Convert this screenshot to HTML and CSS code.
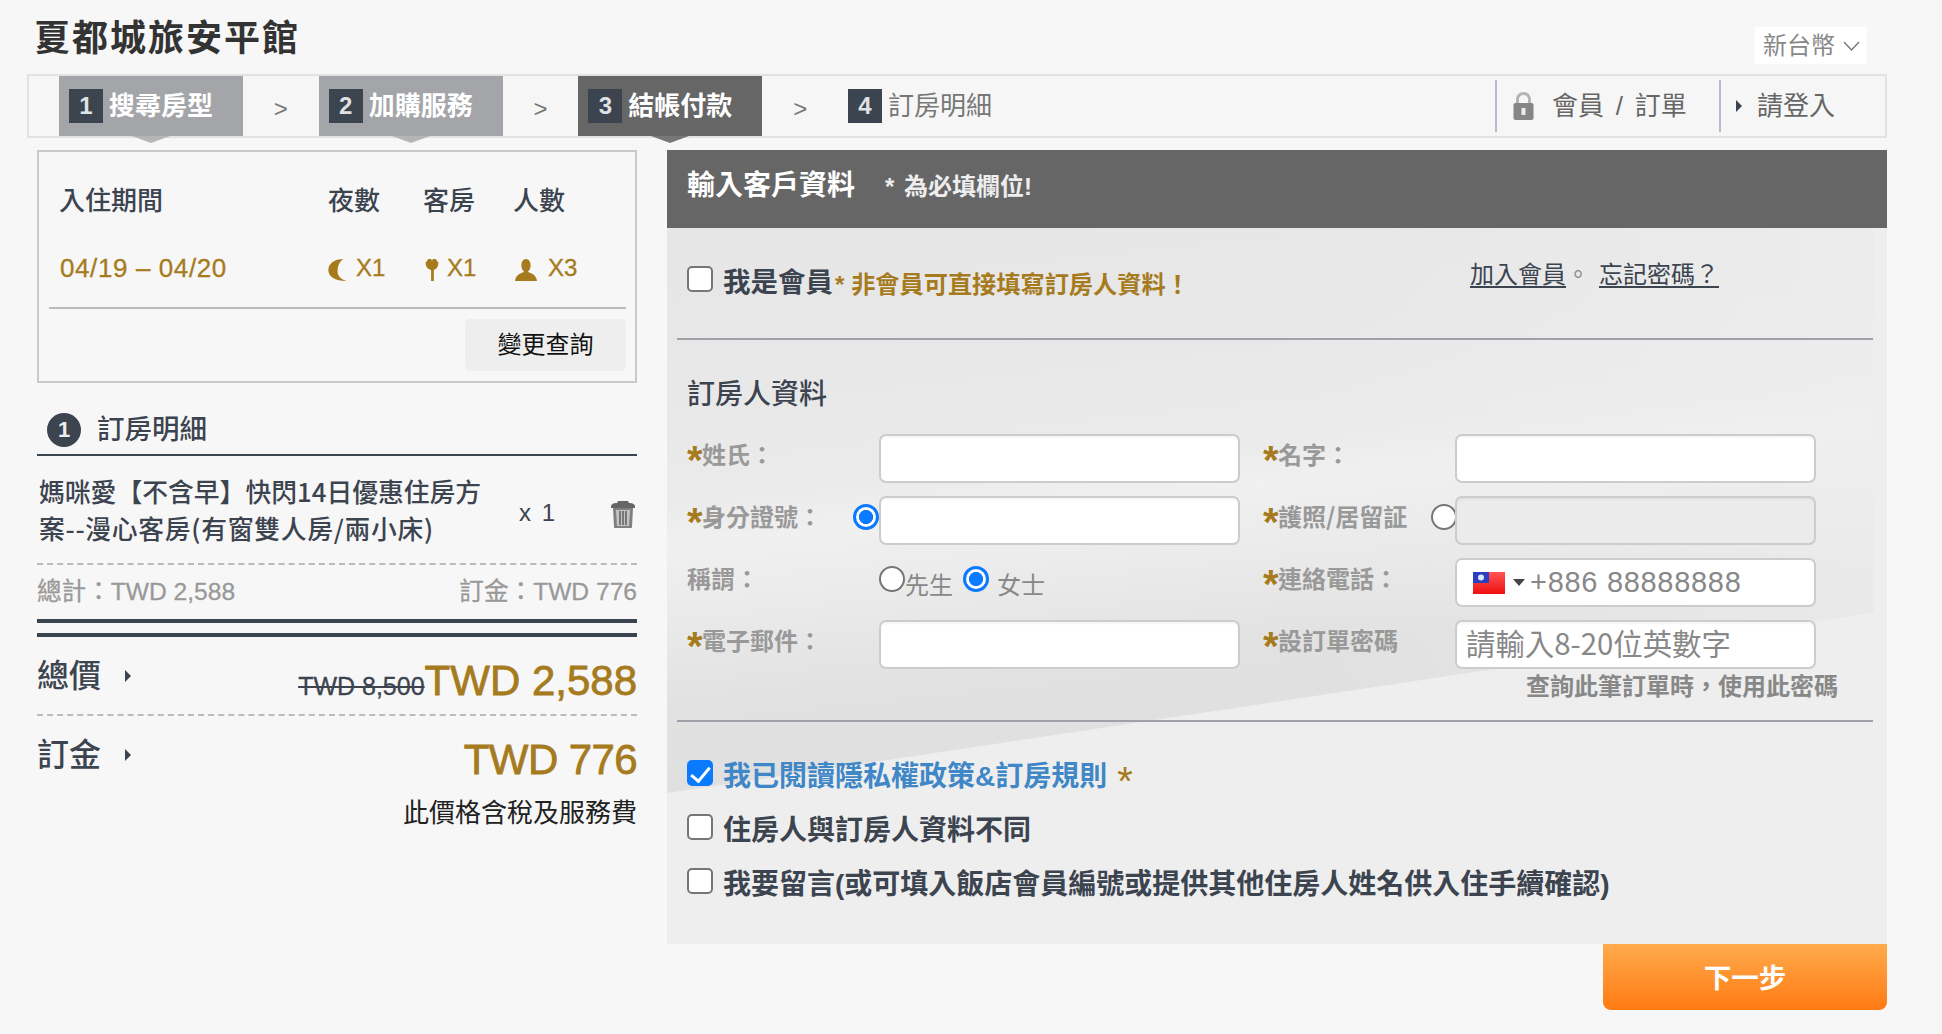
FILE: index.html
```html
<!DOCTYPE html>
<html lang="zh-Hant">
<head>
<meta charset="utf-8">
<title>夏都城旅安平館</title>
<link rel="stylesheet" href="styles.css">
</head>
<body>
<header class="top">
  <h1 class="hotel">夏都城旅安平館</h1>
  <div class="currency">新台幣
    <svg class="chev" viewBox="0 0 17 10"><path d="M1 1l7.5 8L16 1" fill="none" stroke="#777" stroke-width="1.4"/></svg>
  </div>
</header>

<nav class="steps">
  <div class="step done"><span class="num">1</span>搜尋房型</div>
  <div class="sep">&gt;</div>
  <div class="step done"><span class="num">2</span>加購服務</div>
  <div class="sep">&gt;</div>
  <div class="step now"><span class="num">3</span>結帳付款</div>
  <div class="sep">&gt;</div>
  <div class="step next"><span class="num">4</span>訂房明細</div>
  <div class="account">
    <div class="acct-item member">
      <svg class="lock" viewBox="0 0 20 28"><path d="M4 13V7a6 5.5 0 0 1 12 0v6" fill="none" stroke="#b4b4b4" stroke-width="3"/><rect y="11" width="20" height="17" rx="2" fill="#868686"/><rect x="8" y="16" width="4" height="7" fill="#ececec"/></svg>
      <span class="acct-text">會員 / 訂單</span>
    </div>
    <div class="acct-item login"><i class="tri dark"></i><span>請登入</span></div>
  </div>
</nav>

<main class="main">
  <aside class="side">
    <section class="stay">
      <div class="stay-row stay-head">
        <span class="c-date">入住期間</span><span class="c-n">夜數</span><span class="c-r">客房</span><span class="c-p">人數</span>
      </div>
      <div class="stay-row stay-val">
        <span class="c-date date-text">04/19 – 04/20</span>
        <span class="c-n"><svg class="ic moon" viewBox="0 0 20 24"><path d="M16 0C7 0 0 5 0 12c0 7 7 12 20 12-6-2-10-5-10-11 0-5 2-10 6-13z" fill="#a67b1e"/></svg>X1</span>
        <span class="c-r"><svg class="ic key" viewBox="0 0 14 24"><path d="M3 0h3l1 2 1-2h3l3 4c0 4-2 7-5 8v12H6V12C2 11 0 8 0 4z" fill="#a67b1e"/></svg>X1</span>
        <span class="c-p"><svg class="ic person" viewBox="0 0 24 24"><path d="M12 0c3 0 5 3 5 7 0 3-1 5-3 7 4 2 9 3 10 10H0c1-7 6-8 10-10-2-2-3-4-3-7 0-4 2-7 5-7z" fill="#a67b1e"/></svg>X3</span>
      </div>
      <div class="stay-line"></div>
      <div class="stay-act"><button class="change" type="button">變更查詢</button></div>
    </section>

    <h2 class="detail-title"><span class="circle">1</span>訂房明細</h2>
    <div class="item">
      <p class="item-name"><span class="ln">媽咪愛【不含早】快閃14日優惠住房方</span><span class="ln wide">案--漫心客房(有窗雙人房/兩小床)</span></p>
      <span class="qty">x 1</span>
      <svg class="trash" viewBox="0 0 26 28"><path d="M1 7c0-3 2-4 6-4l1-2h10l1 2c4 0 6 1 6 4v1H1z" fill="#666"/><path d="M3 8h20l-1 19c0 .6-.5 1-1 1H5c-.5 0-1-.4-1-1z" fill="#808080"/><path d="M6 10h14l-1 16H7z" fill="#c4c4c4"/><path d="M9 11h2v14H9zM12 11h2v14h-2zM15 11h2v14h-2z" fill="#777"/></svg>
    </div>
    <div class="subtotal"><span>總計：TWD 2,588</span><span>訂金：TWD 776</span></div>
    <div class="double"></div>
    <div class="price-row total">
      <span class="price-label">總價<i class="tri dark"></i></span>
      <span class="price-val"><s class="old">TWD 8,500</s><b class="big">TWD 2,588</b></span>
    </div>
    <div class="price-row">
      <span class="price-label">訂金<i class="tri dark"></i></span>
      <span class="price-val"><b class="big tight">TWD 776</b></span>
    </div>
    <p class="tax">此價格含稅及服務費</p>
  </aside>

  <div class="content">
    <section class="panel">
      <div class="panel-head"><h2 class="panel-title">輸入客戶資料</h2><span class="panel-note">* 為必填欄位!</span></div>
      <div class="panel-body">
        <div class="member-row">
          <input class="cb" type="checkbox">
          <span class="check-label">我是會員</span><span class="member-note">* 非會員可直接填寫訂房人資料！</span>
          <span class="links"><a class="lnk" href="#">加入會員</a><span class="dot">。</span><a class="lnk" href="#">忘記密碼？</a></span>
        </div>
        <h3 class="form-title">訂房人資料</h3>
        <div class="form-grid">
          <div class="field"><label class="lab"><em>*</em>姓氏：</label><input class="inp" type="text"></div>
          <div class="field"><label class="lab"><em>*</em>名字：</label><input class="inp" type="text"></div>
          <div class="field"><label class="lab"><em>*</em>身分證號：</label><input class="rd side-rd" type="radio" name="idt" checked><input class="inp" type="text"></div>
          <div class="field"><label class="lab"><em>*</em>護照/居留証</label><input class="rd side-rd rd-clip" type="radio" name="idt"><input class="inp off" type="text" disabled></div>
          <div class="field"><label class="lab">稱謂：</label>
            <div class="title-opts"><input class="rd" type="radio" name="ttl"><span class="opt">先生</span><input class="rd rd2" type="radio" name="ttl" checked><span class="opt opt2">女士</span></div>
          </div>
          <div class="field"><label class="lab"><em>*</em>連絡電話：</label>
            <div class="phone">
              <svg class="flag" viewBox="0 0 32 22"><defs><linearGradient id="fr" x1="0" y1="0" x2="0" y2="1"><stop offset="0" stop-color="#f55"/><stop offset="1" stop-color="#ee1010"/></linearGradient></defs><rect width="32" height="22" fill="url(#fr)"/><rect width="16" height="11" fill="#2a3fc0"/><circle cx="8" cy="5.5" r="3" fill="#dfe6ff"/></svg>
              <i class="caret"></i><span class="tel">+886 88888888</span>
            </div>
          </div>
          <div class="field"><label class="lab"><em>*</em>電子郵件：</label><input class="inp" type="text"></div>
          <div class="field"><label class="lab"><em>*</em>設訂單密碼</label><input class="inp pw" type="text" placeholder="請輸入8-20位英數字"></div>
          <p class="hint">查詢此筆訂單時，使用此密碼</p>
        </div>
        <div class="checks">
          <div class="check-row"><input class="cb" type="checkbox" checked><span class="check-label agree">我已閱讀隱私權政策&amp;訂房規則</span><em class="star">*</em></div>
          <div class="check-row"><input class="cb" type="checkbox"><span class="check-label">住房人與訂房人資料不同</span></div>
          <div class="check-row"><input class="cb" type="checkbox"><span class="check-label">我要留言(或可填入飯店會員編號或提供其他住房人姓名供入住手續確認)</span></div>
        </div>
      </div>
    </section>
    <div class="actions"><button class="next-btn" type="button">下一步</button></div>
  </div>
</main>
</body>
</html>
```
FILE: styles.css
```css
* { box-sizing: border-box; }
html, body { margin: 0; padding: 0; }
body {
  background: #f7f7f7;
  color: #3c4450;
  font-family: "Liberation Sans", "Noto Sans CJK TC", sans-serif;
  font-size: 24px;
  width: 1942px;
  min-height: 1034px;
  overflow: hidden;
}
h1, h2, h3, p { margin: 0; font-weight: normal; }
em { font-style: normal; }

/* header */
.top { display: flex; justify-content: space-between; align-items: flex-start; height: 74px; padding: 0 75px 0 34px; }
.hotel { font-size: 36px; font-weight: 700; line-height: 44px; margin-top: 17px; letter-spacing: 2px; color: #333; }
.currency { margin-top: 27px; width: 112px; height: 37px; background: #fff; color: #888; line-height: 37px; padding-left: 8px; display: flex; align-items: center; gap: 8px; }
.chev { width: 17px; height: 10px; }

/* steps */
.steps { display: flex; align-items: flex-start; height: 64px; margin: 0 55px 0 27px; padding-left: 30px; border: 2px solid #e2e2e2; background: #f6f6f6; position: relative; }
.step { width: 184px; height: 60px; padding: 14px 0 0 10px; display: flex; align-items: flex-start; font-size: 26px; line-height: 32px; font-weight: 700; color: #fff; position: relative; flex: none; }
.step .num { width: 34px; height: 34px; margin: -1px 6px 0 0; background: #3c4450; color: #dfe1e4; text-align: center; font-size: 24px; line-height: 34px; font-weight: 700; flex: none; }
.done { background: #a4a5a8; }
.now { background: #666; }
.done::after, .now::after { content: ""; position: absolute; left: 73px; top: 60px; border-left: 19px solid transparent; border-right: 19px solid transparent; border-top: 7px solid #b5b5b8; }
.now::after { border-top-color: #777; }
.next { color: #777; font-weight: 400; }
.sep { width: 75.67px; flex: none; text-align: center; color: #777; font-size: 24px; line-height: 60px; padding-top: 3px; }
.account { margin-left: auto; display: flex; align-items: flex-start; padding-top: 4px; color: #666; font-size: 26px; }
.acct-item { height: 52px; border-left: 2px solid #b4bcc8; display: flex; align-items: center; line-height: 52px; }
.member { width: 224px; padding-left: 16px; }
.lock { width: 21px; height: 28px; margin-right: 18px; flex: none; }
.acct-text { word-spacing: 4.5px; }
.login { width: 166px; padding-left: 15px; }
.login .tri { margin-right: 15px; }
.tri { display: inline-block; width: 0; height: 0; border-left: 6px solid #555; border-top: 6px solid transparent; border-bottom: 6px solid transparent; flex: none; }
.tri.dark { border-left-color: #3c4450; }

/* layout */
.main { display: grid; grid-template-columns: 600px 1220px; column-gap: 30px; padding: 12px 55px 0 37px; }

/* stay box */
.stay { height: 233px; border: 2px solid #c9c9c9; padding: 0 9px 0 10px; }
.stay-row { display: grid; grid-template-columns: 269px 95px 90px 1fr; padding-left: 10px; }
.stay-head { margin-top: 33px; font-size: 26px; line-height: 32px; font-weight: 500; }
.stay-val { margin-top: 35px; font-size: 24px; line-height: 32px; color: #a67b1e; -webkit-text-stroke: .3px #a67b1e; }
.stay-val span { display: flex; align-items: center; }
.date-text { font-size: 26px; letter-spacing: .6px; padding-left: 1px; }
.ic { flex: none; height: 22px; margin-top: 4px; }
.moon { width: 19px; margin-right: 9px; }
.key { width: 14px; margin: 4px 8px 0 2px; }
.person { width: 24px; margin: 4px 10px 0 1px; }
.stay-line { height: 2px; margin-top: 23px; background: #bbb; }
.stay-act { display: flex; justify-content: flex-end; margin-top: 10px; }
.change { width: 161px; height: 52px; border: 0; border-radius: 5px; background: #eee; color: #111; font: inherit; line-height: 52px; padding: 0; }

/* order */
.detail-title { display: flex; align-items: flex-start; height: 43px; margin-top: 30px; padding-left: 10px; border-bottom: 2px solid #3c4450; font-size: 27.5px; line-height: 34px; font-weight: 500; }
.circle { width: 34px; height: 34px; border-radius: 50%; background: #3c4450; color: #eee; font-family: "Liberation Sans", sans-serif; font-size: 22px; font-weight: 700; text-align: center; line-height: 34px; margin-right: 16px; }
.item { position: relative; display: flex; align-items: flex-start; height: 109px; padding: 16px 0 0 2px; border-bottom: 2px dashed #bbb; }
.item-name { width: 455px; font-family: "Noto Sans CJK TC", sans-serif; font-size: 25.8px; line-height: 37px; font-weight: 500; flex: none; }
.ln { display: block; white-space: nowrap; }
.wide { letter-spacing: .7px; }
.qty { margin: 22px 0 0 25px; width: 90px; line-height: 38px; letter-spacing: 2px; }
.trash { width: 26px; height: 28px; margin: 28px 1px 0 auto; flex: none; }
.subtotal { display: flex; justify-content: space-between; margin-top: 11px; font-size: 24.6px; line-height: 32px; color: #999; -webkit-text-stroke: .3px #999; }
.double { height: 18px; margin-top: 11px; border-top: 4px solid #3c4450; border-bottom: 4px solid #3c4450; }
.price-row { display: flex; justify-content: space-between; align-items: flex-start; height: 79px; }
.total { border-bottom: 2px dashed #bbb; }
.price-label { display: flex; align-items: center; margin-top: 19px; font-size: 32px; line-height: 40px; font-weight: 500; }
.price-label .tri { margin-left: 24px; }
.price-val { display: flex; align-items: baseline; margin-top: 20px; line-height: 48px; }
.old { font-size: 25px; color: #3c4450; -webkit-text-stroke: .3px #3c4450; }
.big { font-size: 42px; font-weight: 400; color: #a67b1e; -webkit-text-stroke: .8px #a67b1e; }
.tight { letter-spacing: -.6px; }
.tax { margin-top: 2px; text-align: right; font-size: 26px; line-height: 32px; color: #222; }

/* panel */
.panel-head { display: flex; align-items: center; height: 78px; padding: 0 0 6px 20px; background: #666; color: #fff; }
.panel-title { font-size: 28px; font-weight: 700; line-height: 36px; }
.panel-note { margin-left: 30px; font-size: 24px; font-weight: 700; line-height: 36px; color: #eee; padding-top: 2px; word-spacing: 3px; }
.panel-body { position: relative; isolation: isolate; height: 716px; background: #eee; padding: 0 14px 0 20px; }
.panel-body::before { content: ""; position: absolute; z-index: -1; left: 0; top: 0; width: 1207px; height: 565px; clip-path: polygon(0 0, 100% 0, 100% 68%, 0 100%); background: linear-gradient(90deg, rgba(238,238,238,0) 55%, rgba(238,238,238,.65) 100%), linear-gradient(174deg, #e6e6e6 0%, #e8e8e8 25%, #ebebeb 40%, #f0f0f0 46%, #ebebeb 55%, #e1e1e1 70%, #dedede 100%); }
.member-row { display: flex; align-items: flex-start; height: 112px; margin-left: -10px; padding: 38px 0 0 10px; border-bottom: 2px solid #a0a0a8; }
.cb { appearance: none; -webkit-appearance: none; flex: none; position: relative; width: 26px; height: 26px; margin: 0 10px 0 0; background: #fff; border: 2px solid #767676; border-radius: 5px; }
.cb:checked { background: #0a7aff; border-color: #0a7aff; }
.cb:checked::after { content: ""; position: absolute; left: 6px; top: 1px; width: 8px; height: 16px; border: solid #fff; border-width: 0 3px 3px 0; transform: rotate(40deg); }
.check-label { font-size: 28px; font-weight: 700; line-height: 36px; }
.member-row .check-label { margin-top: -1px; font-size: 27.5px; }
.member-note { margin-left: 2px; margin-top: 1px; font-size: 24.2px; font-weight: 700; line-height: 36px; color: #a67b1e; white-space: pre; }
.links { margin-left: auto; margin-top: -9px; padding-right: 154px; display: flex; line-height: 36px; }
.lnk { color: #3c4450; text-decoration: underline; text-underline-offset: 3px; }
.dot { width: 33px; color: #888; }
.form-title { margin-top: 37px; font-size: 28px; font-weight: 500; line-height: 36px; }
.form-grid { display: grid; grid-template-columns: 553px 575px; column-gap: 23px; row-gap: 13px; margin-top: 21px; }
.field { display: flex; align-items: flex-start; height: 49px; position: relative; }
.lab { width: 192px; flex: none; font-family: "Noto Sans CJK TC", sans-serif; font-size: 24px; font-weight: 700; line-height: 32px; color: #999; margin-top: 4px; }
.lab em { display: inline-block; width: 15px; font-family: "Liberation Sans", sans-serif; color: #a67b1e; font-size: 40px; line-height: 0; vertical-align: -10px; }
.inp { width: 361px; height: 49px; flex: none; position: relative; border: 2px solid #ccc; border-radius: 7px; background: #fff; padding: 0 9px; font: inherit; font-size: 28px; box-shadow: inset 0 2px 2px rgba(0,0,0,.04); }
.inp.off { background: #ebebeb; }
.inp.pw { font-family: "Noto Sans CJK TC", sans-serif; font-size: 29.4px; padding-bottom: 6px; }
.inp.pw::placeholder { color: #888; opacity: 1; }
.rd { appearance: none; -webkit-appearance: none; flex: none; width: 26px; height: 26px; margin: 0; border: 2px solid #767676; border-radius: 50%; background: #fff; }
.rd:checked { border: 3px solid #0a7aff; background: radial-gradient(circle, #0a7aff 0 48%, #fff 52%); }
.side-rd { position: absolute; left: 166px; top: 8px; }
.rd-clip { left: 168px; }
.title-opts { display: flex; align-items: flex-start; padding-top: 8px; }
.opt { color: #888; line-height: 34px; margin-top: 3px; }
.rd2 { margin-left: 10px; }
.opt2 { margin-left: 8px; }
.phone { width: 361px; height: 49px; display: flex; align-items: center; border: 2px solid #ccc; border-radius: 7px; background: #fff; padding-left: 16px; }
.flag { width: 32px; height: 22px; flex: none; }
.caret { width: 0; height: 0; margin: 0 5px 0 8px; border-left: 6px solid transparent; border-right: 6px solid transparent; border-top: 7px solid #444; flex: none; }
.tel { font-size: 29px; letter-spacing: .7px; color: #888; line-height: 49px; }
.hint { grid-column: 2; margin-top: -7px; text-align: right; font-size: 24px; font-weight: 700; line-height: 24px; color: #888; }
.checks { margin: 21px 0 0 -10px; padding: 26px 0 0 10px; border-top: 2px solid #a0a0a8; }
.check-row { display: flex; align-items: flex-start; height: 54px; }
.check-row .cb { margin-top: 12px; }
.check-row .check-label { line-height: 58px; }
.agree { color: #3f87c6; }
.star { margin-left: 10px; color: #a67b1e; line-height: 66px; font-size: 40px; font-family: "Liberation Sans", sans-serif; }
.actions { display: flex; justify-content: flex-end; }
.next-btn { width: 284px; height: 66px; border: 0; border-radius: 0 0 8px 8px; background: linear-gradient(#ffab4d, #ff7a12); color: #fff; font: inherit; font-size: 27.5px; font-weight: 700; padding: 0 0 3px; }
```
